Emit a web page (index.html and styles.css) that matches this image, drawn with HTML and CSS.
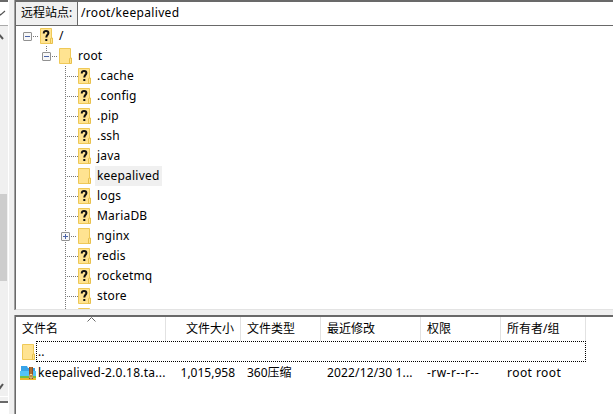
FILE: index.html
```
<!DOCTYPE html>
<html lang="zh-CN">
<head>
<meta charset="utf-8">
<title>远程站点</title>
<link rel="stylesheet" href="styles.css">
</head>
<body>
<svg class="defs" width="0" height="0" aria-hidden="true">
  <symbol id="folder" viewBox="0 0 13 16">
    <path d="M.5.5h11v15H.5z" fill="#ffe391" stroke="#efc957"/>
    <path d="M10.500 15.500V11l.5-1h1.500v5.500z" fill="#ffe58f" stroke="#e8c04c"/>
  </symbol>
  <symbol id="unknown" viewBox="0 0 13 16">
    <use href="#folder"/>
    <path d="M3.800 5.500V5c0-1.300.8-2 2.200-2s2.400.7 2.400 2c0 1.800-2.100 1.900-2.100 4.500M5.300 12h2" fill="none" stroke="#111" stroke-width="2"/>
  </symbol>
</svg>
<div class="app">
  <aside class="local">
    <div class="combo"><svg width="8" height="25"><path d="M-3 9l3.500 4L5 9" fill="none" stroke="#555" stroke-width="1.2"/></svg></div>
    <div class="scroll">
      <svg width="8" height="12"><path d="M-2 9L0 6.500 3 10" fill="none" stroke="#555" stroke-width="2"/></svg>
      <div class="thumb"></div>
      <svg class="down" width="8" height="12"><path d="M-2 3L0 6 3 2" fill="none" stroke="#555" stroke-width="2"/></svg>
    </div>
    <div class="files"></div>
  </aside>
  <main class="remote">
    <div class="address"><label>远程站点:</label><span>/root/keepalived</span></div>
    <div class="tree">
      <div class="node root"><i class="box"></i><i class="dash"></i><svg class="icon"><use href="#unknown"/></svg><span>/</span></div>
      <div class="node home"><i class="box"></i><i class="dash"></i><svg class="icon"><use href="#folder"/></svg><span>root</span></div>
      <div class="children">
        <div class="node"><i class="dash"></i><svg class="icon"><use href="#unknown"/></svg><span>.cache</span></div>
        <div class="node"><i class="dash"></i><svg class="icon"><use href="#unknown"/></svg><span>.config</span></div>
        <div class="node"><i class="dash"></i><svg class="icon"><use href="#unknown"/></svg><span>.pip</span></div>
        <div class="node"><i class="dash"></i><svg class="icon"><use href="#unknown"/></svg><span>.ssh</span></div>
        <div class="node"><i class="dash"></i><svg class="icon"><use href="#unknown"/></svg><span>java</span></div>
        <div class="node"><i class="dash"></i><svg class="icon"><use href="#folder"/></svg><span class="selected">keepalived</span></div>
        <div class="node"><i class="dash"></i><svg class="icon"><use href="#unknown"/></svg><span>logs</span></div>
        <div class="node"><i class="dash"></i><svg class="icon"><use href="#unknown"/></svg><span>MariaDB</span></div>
        <div class="node expandable"><i class="box plus"></i><i class="dash"></i><svg class="icon"><use href="#folder"/></svg><span>nginx</span></div>
        <div class="node"><i class="dash"></i><svg class="icon"><use href="#unknown"/></svg><span>redis</span></div>
        <div class="node"><i class="dash"></i><svg class="icon"><use href="#unknown"/></svg><span>rocketmq</span></div>
        <div class="node"><i class="dash"></i><svg class="icon"><use href="#unknown"/></svg><span>store</span></div>
        <div class="node"><i class="dash"></i><svg class="icon"><use href="#unknown"/></svg></div>
      </div>
    </div>
    <div class="list">
      <div class="row head">
        <div>文件名<svg class="sort" width="9" height="5"><path d="M.5 4.500l4-4 4 4" fill="none" stroke="#666"/></svg></div>
        <div class="size">文件大小</div><div>文件类型</div><div>最近修改</div><div>权限</div><div>所有者/组</div>
      </div>
      <div class="parent"><svg class="icon"><use href="#folder"/></svg><div class="focus">..</div></div>
      <div class="row file">
        <div class="name"><svg width="16" height="14" viewBox="0 0 16 14">
          <path d="M1 0h6l1 2h7v6H1z" fill="#37a3e8"/><path d="M0 5h16v5H0z" fill="#54c3f7"/>
          <path d="M0 10h16v2H0z" fill="#72c044"/><path d="M0 12h16v2H0z" fill="#efb62d"/>
          <path d="M9 1h4v12H9z" fill="#914f22"/><path d="M10.500 1h1v8h-1z" fill="#c98d45"/>
          <path d="M10 8.500h2v3.500h-2z" fill="#6b3515" stroke="#ffe091"/>
        </svg><span>keepalived-2.0.18.ta...</span></div>
        <div class="size">1,015,958</div><div>360压缩</div><div class="date">2022/12/30 1...</div><div class="wide">-rw-r--r--</div><div class="wide">root root</div>
      </div>
    </div>
  </main>
</div>
</body>
</html>
```
FILE: styles.css
```
* { box-sizing: border-box; }
body { margin: 0; background: #f0f0f0; color: #000; font: 12px/20px "Noto Sans", "Noto Sans CJK SC", sans-serif; }
.defs { position: absolute; }
svg { display: block; flex: none; }
.app { display: flex; width: 613px; height: 414px; overflow: hidden; }
.local { width: 9px; border-right: 1px solid #fff; display: flex; flex-direction: column; }
.combo { height: 26px; border-top: 2px solid #696969; border-bottom: 1px solid #aaa; background: #fff; overflow: hidden; }
.scroll { height: 371px; padding-top: 3px; border-bottom: 1px solid #fff; display: flex; flex-direction: column; }
.thumb { width: 7px; height: 87px; margin-top: 153px; background: #cdcdcd; }
.down { margin-top: 101px; }
.files { flex: 1; margin-top: 4px; border-top: 2px solid #696969; background: #fff; }
.remote { flex: 1; min-width: 0; margin-left: 6px; display: flex; flex-direction: column; }
.address, .tree, .list { box-shadow: -1px 0 #a0a0a0; }
.address { height: 26px; display: flex; border: solid #696969; border-width: 2px 0 1px 1px; background: #fff; }
.address label { width: 62px; padding-left: 5px; border-right: 1px solid #696969; background: #f0f0f0; line-height: 22px; white-space: nowrap; }
.address span { padding-left: 3px; line-height: 22px; letter-spacing: .34px; }
.tree { height: 284px; overflow: hidden; border-left: 1px solid #696969; background: #fff; border-bottom: 1px solid #e3e3e3; }
.node { height: 20px; display: flex; align-items: center; }
.root { padding-left: 7px; }
.home { padding-left: 26px; background: repeating-linear-gradient(#777 0 1px, #fff 1px 2px) 30px 0 / 1px 6px no-repeat; }
.children { margin-left: 49px; background: repeating-linear-gradient(#777 0 1px, #fff 1px 2px) 0 0 / 1px 100% no-repeat; }
.icon { width: 13px; height: 16px; }
.dash { width: 13px; height: 1px; background: repeating-linear-gradient(90deg, #777 0 1px, #fff 1px 2px); }
.box { width: 9px; height: 9px; border: 1px solid #919191; border-radius: 1px; background: linear-gradient(#4b63a7, #4b63a7) center / 5px 1px no-repeat, #f7f7f7; }
.plus { background: linear-gradient(#4b63a7, #4b63a7) center / 5px 1px no-repeat, linear-gradient(#4b63a7, #4b63a7) center / 1px 5px no-repeat, #f7f7f7; }
.box + .dash { width: 6px; margin: 0 1px; }
.expandable { margin-left: -4px; }
.node span { height: 20px; margin-left: 4px; padding: 0 2px; line-height: 20px; letter-spacing: .2px; }
.selected { background: #f0f0f0; }
.list { flex: 1; margin-top: 5px; border: solid #696969; border-width: 2px 0 0 1px; background: #fff; }
.row { display: grid; grid-template-columns: 150px 75px 80px 100px 80px 85px; white-space: nowrap; }
.row > div { padding-left: 6px; }
.row > .size { text-align: right; padding: 0 6px 0 0; }
.head { height: 24px; line-height: 23px; }
.head > div { position: relative; border-right: 1px solid #e2e2e2; }
.sort { position: absolute; left: 71px; top: 0; }
.parent { height: 21px; display: flex; align-items: center; padding-left: 6px; }
.focus { width: 550px; height: 21px; margin-left: 1px; padding-left: 1px; border: 1px dotted #000; }
.file { line-height: 21px; }
.file > .name { display: flex; align-items: center; padding-left: 4px; gap: 2px; letter-spacing: .24px; }
.date { letter-spacing: .15px; }
.wide { letter-spacing: .45px; }
```
